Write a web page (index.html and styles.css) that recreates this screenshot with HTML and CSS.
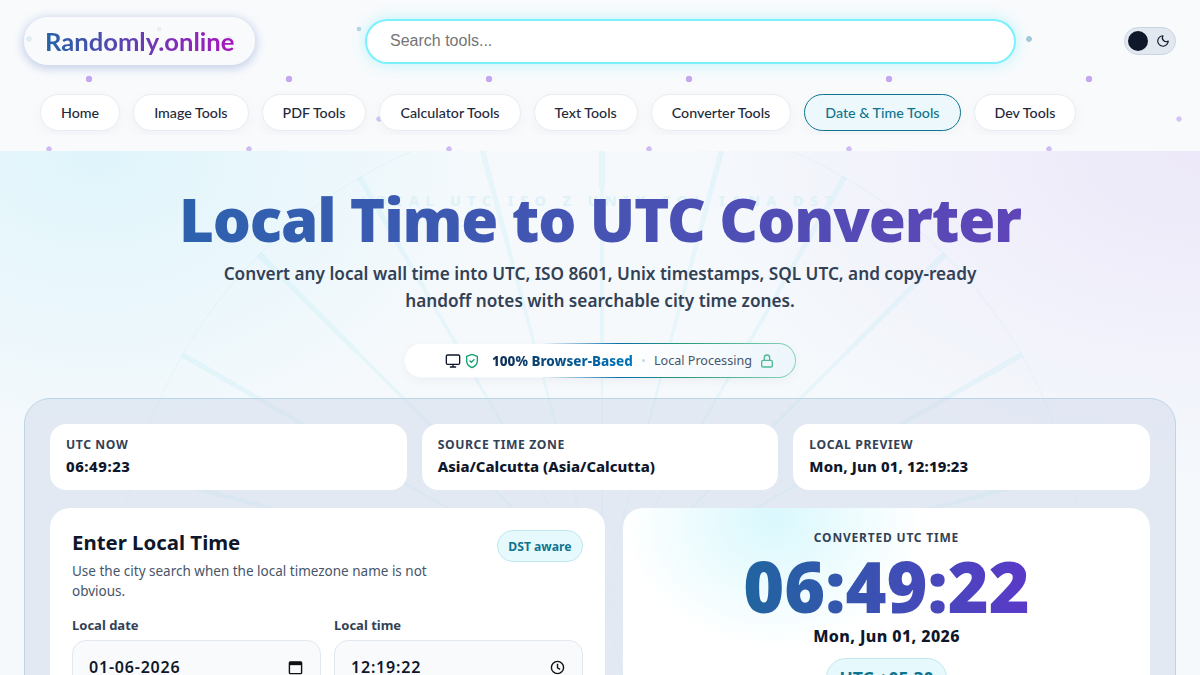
FILE: index.html
```html
<!DOCTYPE html>
<html lang="en">
<head>
<meta charset="utf-8">
<title>Local Time to UTC Converter</title>
<link rel="stylesheet" href="styles.css">
</head>
<body>
<header class="header">
  <div class="dots"></div>
  <div class="top-row">
    <a class="logo"><span class="logo-text">Randomly.online</span></a>
    <div class="search"><span class="search-ph">Search tools...</span></div>
    <div class="theme"><span class="knob"></span>
      <svg class="moon" viewBox="0 0 24 24" width="14" height="14"><path d="M12 3a6.5 6.5 0 0 0 9 9 9 9 0 1 1-9-9Z" fill="none" stroke="#0f172a" stroke-width="2" stroke-linecap="round" stroke-linejoin="round"/></svg>
    </div>
  </div>
  <nav class="nav">
    <a class="pill">Home</a>
    <a class="pill">Image Tools</a>
    <a class="pill">PDF Tools</a>
    <a class="pill">Calculator Tools</a>
    <a class="pill">Text Tools</a>
    <a class="pill">Converter Tools</a>
    <a class="pill active">Date &amp; Time Tools</a>
    <a class="pill">Dev Tools</a>
  </nav>
</header>
<main class="hero">
  <div class="rays"></div>
  <div class="ghost">LOCAL UTC ISO Z UNIX SQL IANA DST</div>
  <h1 class="title">Local Time to UTC Converter</h1>
  <p class="lead">Convert any local wall time into UTC, ISO 8601, Unix timestamps, SQL UTC, and copy-ready handoff notes with searchable city time zones.</p>
  <div class="badge">
    <svg viewBox="0 0 24 24" width="16" height="16" fill="none" stroke="#0f172a" stroke-width="2" stroke-linecap="round" stroke-linejoin="round"><rect x="2" y="3" width="20" height="14" rx="2"/><path d="M8 21h8M12 17v4"/></svg>
    <svg class="shield" viewBox="0 0 24 24" width="16" height="16" fill="none" stroke="#10a070" stroke-width="2" stroke-linecap="round" stroke-linejoin="round"><path d="M12 22s8-3.5 8-10V5l-8-3-8 3v7c0 6.500 8 10 8 10Z"/><path d="m9 12 2 2 4-4"/></svg>
    <strong class="badge-main">100% Browser-Based</strong>
    <span class="badge-dot"></span>
    <span class="badge-sub">Local Processing</span>
    <svg viewBox="0 0 24 24" width="16" height="16" fill="none" stroke="#4fba92" stroke-width="2" stroke-linecap="round" stroke-linejoin="round"><rect x="4" y="11" width="16" height="10" rx="2"/><path d="M8 11V7a4 4 0 0 1 8 0v4"/></svg>
  </div>
  <section class="panel">
    <div class="stats">
      <div class="stat"><span class="stat-label">UTC NOW</span><span class="stat-value stat-time">06:49:23</span></div>
      <div class="stat"><span class="stat-label">SOURCE TIME ZONE</span><span class="stat-value">Asia/Calcutta (Asia/Calcutta)</span></div>
      <div class="stat"><span class="stat-label">LOCAL PREVIEW</span><span class="stat-value stat-preview">Mon, Jun 01, 12:19:23</span></div>
    </div>
    <div class="cols">
      <div class="card form-card">
        <div class="card-head">
          <div class="card-intro">
            <h2 class="card-title">Enter Local Time</h2>
            <p class="card-desc">Use the city search when the local timezone name is not obvious.</p>
          </div>
          <span class="chip">DST aware</span>
        </div>
        <div class="fields">
          <div class="field">
            <span class="field-label">Local date</span>
            <div class="input"><span>01-06-2026</span>
              <svg class="input-icon" viewBox="0 0 16 16" width="15" height="15"><rect x="1.500" y="2" width="13" height="12.500" rx="1" fill="none" stroke="#111" stroke-width="1.500"/><rect x="1.500" y="2" width="13" height="3.500" fill="#111"/></svg>
            </div>
          </div>
          <div class="field">
            <span class="field-label">Local time</span>
            <div class="input"><span>12:19:22</span>
              <svg class="input-icon" viewBox="0 0 16 16" width="15" height="15" fill="none" stroke="#111" stroke-width="1.500"><circle cx="8" cy="8" r="6.500"/><path d="M8 4v4.300l2.800 1.600"/></svg>
            </div>
          </div>
        </div>
      </div>
      <div class="card result-card">
        <span class="result-label">CONVERTED UTC TIME</span>
        <div class="result-time">06:49:22</div>
        <div class="result-date">Mon, Jun 01, 2026</div>
        <span class="offset">UTC +05:30</span>
      </div>
    </div>
  </section>
</main>
</body>
</html>
```
FILE: styles.css
```css
* { box-sizing: border-box; }
html, body { margin: 0; height: 675px; overflow: hidden; }
body { font-family: "Noto Sans", sans-serif; color: #0f172a; background: #f8fafc; }
.header { position: relative; height: 151px; background: #f8fafc; padding: 16px 24px 0; }
.dots { position: absolute; inset: 0; pointer-events: none;
  background-image:
    radial-gradient(circle, #c5a8f0 3px, transparent 3.6px),
    radial-gradient(circle, #d0bcf5 2.4px, transparent 3px),
    radial-gradient(circle, #d5c5f7 2.4px, transparent 3px),
    radial-gradient(circle, #a6c9da 2.6px, transparent 3.2px),
    radial-gradient(circle, #b5d5e2 2px, transparent 2.6px);
  background-size: 200px 40px;
  background-repeat: repeat-x;
  background-position: -11px 59px, -51px 129px, 79px 99px, -71px 19px, 59px 9px; }
.top-row { position: relative; display: flex; align-items: center; height: 50px; }
.logo { width: 231px; height: 48px; border-radius: 24px; background: rgba(248,250,252,.72); box-shadow: 0 2px 8px 2px rgba(80,110,190,.28); display: flex; align-items: center; padding-left: 21px; }
.logo-text { font-family: Lato, sans-serif; font-weight: 700; font-size: 25.6px; background: linear-gradient(90deg, #2563a8, #a816bd); -webkit-background-clip: text; background-clip: text; color: transparent; }
.search { width: 651px; height: 45px; margin-left: 110px; border-radius: 23px; background: #fff; border: 2px solid #7cf0fd; box-shadow: 0 0 14px rgba(94,238,252,.4); display: flex; align-items: center; padding-left: 23px; }
.search-ph { font-family: "Liberation Sans", sans-serif; font-size: 16px; color: #757575; }
.theme { width: 52px; height: 28px; margin-left: auto; border-radius: 14px; background: #e2e8f0; border: 1px solid #cbd5e1; display: flex; align-items: center; justify-content: space-between; padding: 0 5px 0 3px; }
.knob { width: 20px; height: 20px; border-radius: 50%; background: #0f172a; }
.nav { position: relative; display: flex; gap: 13px; margin: 24px -24px 0; padding: 4px 40px 0; height: 45px; overflow: hidden; }
.pill { height: 37px; padding: 0 20px; border-radius: 19px; background: #fff; border: 1px solid #e8edf3; box-shadow: 0 4px 14px rgba(15,23,42,.04); display: flex; align-items: center; font-family: Lato, sans-serif; font-size: 14.25px; font-weight: 500; color: #1e293b; }
.pill.active { background: #ecf8fb; border-color: #0e7490; color: #0e7490; }
.hero { position: relative; height: 524px; overflow: hidden; padding: 0 24px; background: radial-gradient(ellipse 400px 300px at 8% 0, #dff5fb, rgba(223,245,251,0)), radial-gradient(ellipse 520px 340px at 100% 0, #ece8f9, rgba(236,232,249,0)), #f5f9fc; display: flex; flex-direction: column; align-items: center; }
.rays { position: absolute; left: 117px; top: -39px; width: 970px; height: 970px; border-radius: 50%; border: 1px solid rgba(165,225,240,.16); background: repeating-conic-gradient(from -.35deg, rgba(165,230,245,.18) 0deg .7deg, transparent .7deg 15deg); }
.ghost { position: absolute; top: 40px; left: 0; right: 0; text-align: center; font-weight: 800; font-size: 14.4px; letter-spacing: 6.400px; color: #dff2f8; }
.title { position: relative; margin: 31px 0 0; font-size: 60px; line-height: 74px; font-weight: 900; letter-spacing: -1.15px; background: linear-gradient(90deg, #2d62ae, #5f45b8); -webkit-background-clip: text; background-clip: text; color: transparent; white-space: nowrap; }
.lead { position: relative; width: 800px; margin: 4px 0 0; text-align: center; font-size: 17.2px; line-height: 27px; font-weight: 600; color: #334155; }
.badge { position: relative; flex: none; margin-top: 29px; width: 392px; height: 35px; border-radius: 18px; border: 1px solid transparent; background: linear-gradient(90deg, #fff 55%, #edf6fc) padding-box, linear-gradient(90deg, transparent 35%, #0a6fa8 55%, #2a9c78 72%, #8ad8bc) border-box; display: flex; align-items: center; padding-left: 40px; box-shadow: 0 3px 10px rgba(15,23,42,.04); }
.shield { margin-left: 3px; }
.badge-main { margin-left: 12px; font-size: 13.5px; font-weight: 800; background: linear-gradient(90deg, #0f2c52, #0078c0); -webkit-background-clip: text; background-clip: text; color: transparent; }
.badge-dot { width: 3px; height: 3px; border-radius: 50%; background: #cbd5e1; margin: 0 9px; }
.badge-sub { font-size: 12.6px; color: #475569; margin-right: 7px; }
.panel { position: relative; flex: none; margin-top: 20px; width: 1152px; height: 320px; padding: 25px; border-radius: 26px 26px 0 0; border: 1px solid #bcd6e6; background: rgba(203,213,230,.42); }
.stats { display: grid; grid-template-columns: repeat(3, 1fr); gap: 15px; }
.stat { height: 66px; border-radius: 16px; background: #fff; padding: 12px 16px; display: flex; flex-direction: column; gap: 2px; }
.stat-label { font-size: 12.16px; line-height: 17px; font-weight: 700; letter-spacing: .6px; color: #334155; }
.stat-value { font-size: 14.9px; line-height: 22px; font-weight: 800; color: #0f172a; }
.stat-time { letter-spacing: .55px; }
.stat-preview { letter-spacing: .15px; }
.cols { display: grid; grid-template-columns: 555px 527px; gap: 18px; margin-top: 18px; }
.card { background: #fff; border-radius: 20px; height: 300px; }
.form-card { padding: 20px 22px; }
.card-head { display: flex; justify-content: space-between; align-items: flex-start; }
.card-intro { width: 370px; }
.card-title { margin: 0; font-size: 20.4px; line-height: 28px; font-weight: 700; color: #0f172a; }
.card-desc { margin: 5px 0 0; font-size: 13.5px; line-height: 20px; color: #475569; }
.chip { height: 32px; padding: 0 10.5px; margin-top: 2px; border-radius: 16px; background: #e6f9fc; border: 1px solid #bfe8ef; display: flex; align-items: center; font-size: 12.16px; font-weight: 700; color: #0e7490; }
.fields { display: grid; grid-template-columns: 1fr 1fr; gap: 13px; margin-top: 15px; }
.field { display: flex; flex-direction: column; gap: 6px; }
.field-label { font-size: 13px; line-height: 18px; font-weight: 700; color: #334155; }
.input { height: 56px; border-radius: 14px; background: #f8fafc; border: 1px solid #e2e8f0; display: flex; align-items: flex-start; justify-content: space-between; padding: 15px 17px 0 16px; font-size: 16px; line-height: 22px; font-weight: 600; letter-spacing: .8px; }
.input-icon { margin-top: 4px; }
.result-card { display: flex; flex-direction: column; align-items: center; padding-top: 21px; background: radial-gradient(ellipse 150px 130px at 150px 10px, #d9f8fd, rgba(255,255,255,0)), #fff; }
.result-label { font-size: 12px; line-height: 18px; font-weight: 700; letter-spacing: .8px; color: #334155; }
.result-time { font-size: 70px; line-height: 80px; margin-top: -1px; font-weight: 900; background: linear-gradient(90deg, #20659f, #5b39c9); -webkit-background-clip: text; background-clip: text; color: transparent; }
.result-date { font-size: 16px; line-height: 20px; font-weight: 800; letter-spacing: .4px; }
.offset { margin-top: 12px; flex: none; height: 40px; padding: 0 12px; border-radius: 20px; background: #e6f9fc; border: 1px solid #bfe8ef; display: flex; align-items: center; font-size: 17.6px; font-weight: 700; color: #0e7490; }
```
